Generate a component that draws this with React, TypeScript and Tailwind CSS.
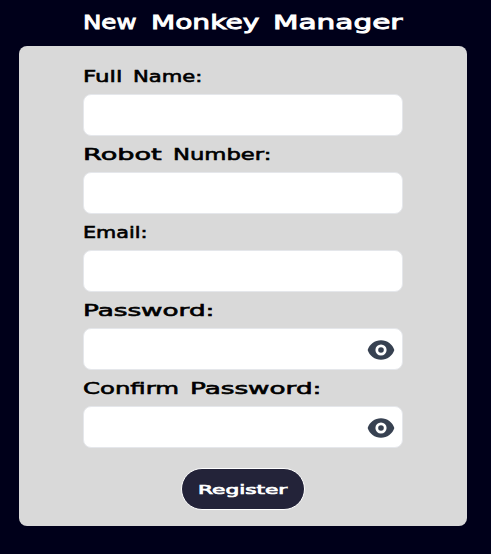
import { useLayoutEffect, useRef, useState } from "react";
import { HiEye } from "react-icons/hi";

type WordSpec = { text: string; width: number };

// A word in extended lettering, stretched horizontally to a given width.
function Word({ text, width }: WordSpec) {
  const ref = useRef<HTMLSpanElement>(null);
  const [scale, setScale] = useState(1);

  useLayoutEffect(() => {
    if (ref.current) setScale(width / ref.current.offsetWidth);
  }, [text, width]);

  return (
    <span className="block whitespace-nowrap text-left" style={{ width }}>
      <span
        ref={ref}
        className="inline-block origin-left"
        style={{ transform: `scaleX(${scale})` }}
      >
        {text}
      </span>
    </span>
  );
}

type FieldProps = { words: WordSpec[]; type?: string; reveal?: boolean };

function Field({ words, type = "text", reveal = false }: FieldProps) {
  const [visible, setVisible] = useState(false);
  return (
    <div>
      <label className="flex h-9 items-center gap-[11px] pt-0.5 text-[16.5px] leading-6 text-black [-webkit-text-stroke:0.6px_black]">
        {words.map((word) => (
          <Word key={word.text} {...word} />
        ))}
      </label>
      <div className="relative">
        <input
          type={visible ? "text" : type}
          className="block h-[42px] w-full rounded-lg border border-gray-200 bg-white px-3 outline-none"
        />
        {reveal && (
          <button
            type="button"
            aria-label="Toggle password"
            onClick={() => setVisible(!visible)}
            className="absolute inset-y-0 right-2 flex items-center pt-0.5"
          >
            <HiEye className="size-7 text-[#374151]" />
          </button>
        )}
      </div>
    </div>
  );
}

export default function App() {
  return (
    <main className="h-[554px] w-full overflow-hidden bg-[#00001a] pl-[19px] font-['DejaVu_Sans',sans-serif]">
      <h1 className="flex h-[46px] items-center gap-[14px] pb-0.5 pl-16 text-[20px] leading-7 text-white [-webkit-text-stroke:0.9px_white]">
        <Word text="New" width={54} />
        <Word text="Monkey" width={108} />
        <Word text="Manager" width={130} />
      </h1>
      <form className="flex h-[480px] w-[448px] flex-col rounded-lg bg-[#d9d9d9] px-16 pt-3">
        <Field
          words={[
            { text: "Full", width: 39 },
            { text: "Name:", width: 69 },
          ]}
        />
        <Field
          words={[
            { text: "Robot", width: 79 },
            { text: "Number:", width: 99 },
          ]}
        />
        <Field words={[{ text: "Email:", width: 64 }]} />
        <Field words={[{ text: "Password:", width: 132 }]} type="password" reveal />
        <Field
          words={[
            { text: "Confirm", width: 96 },
            { text: "Password:", width: 132 },
          ]}
          type="password"
          reveal
        />
        <button
          type="button"
          className="mt-5 flex h-[42px] w-[124px] items-center justify-center self-center rounded-full border border-white bg-[#232339] pt-0.5 text-[13px] text-white [-webkit-text-stroke:0.7px_white]"
        >
          <Word text="Register" width={90} />
        </button>
      </form>
    </main>
  );
}
